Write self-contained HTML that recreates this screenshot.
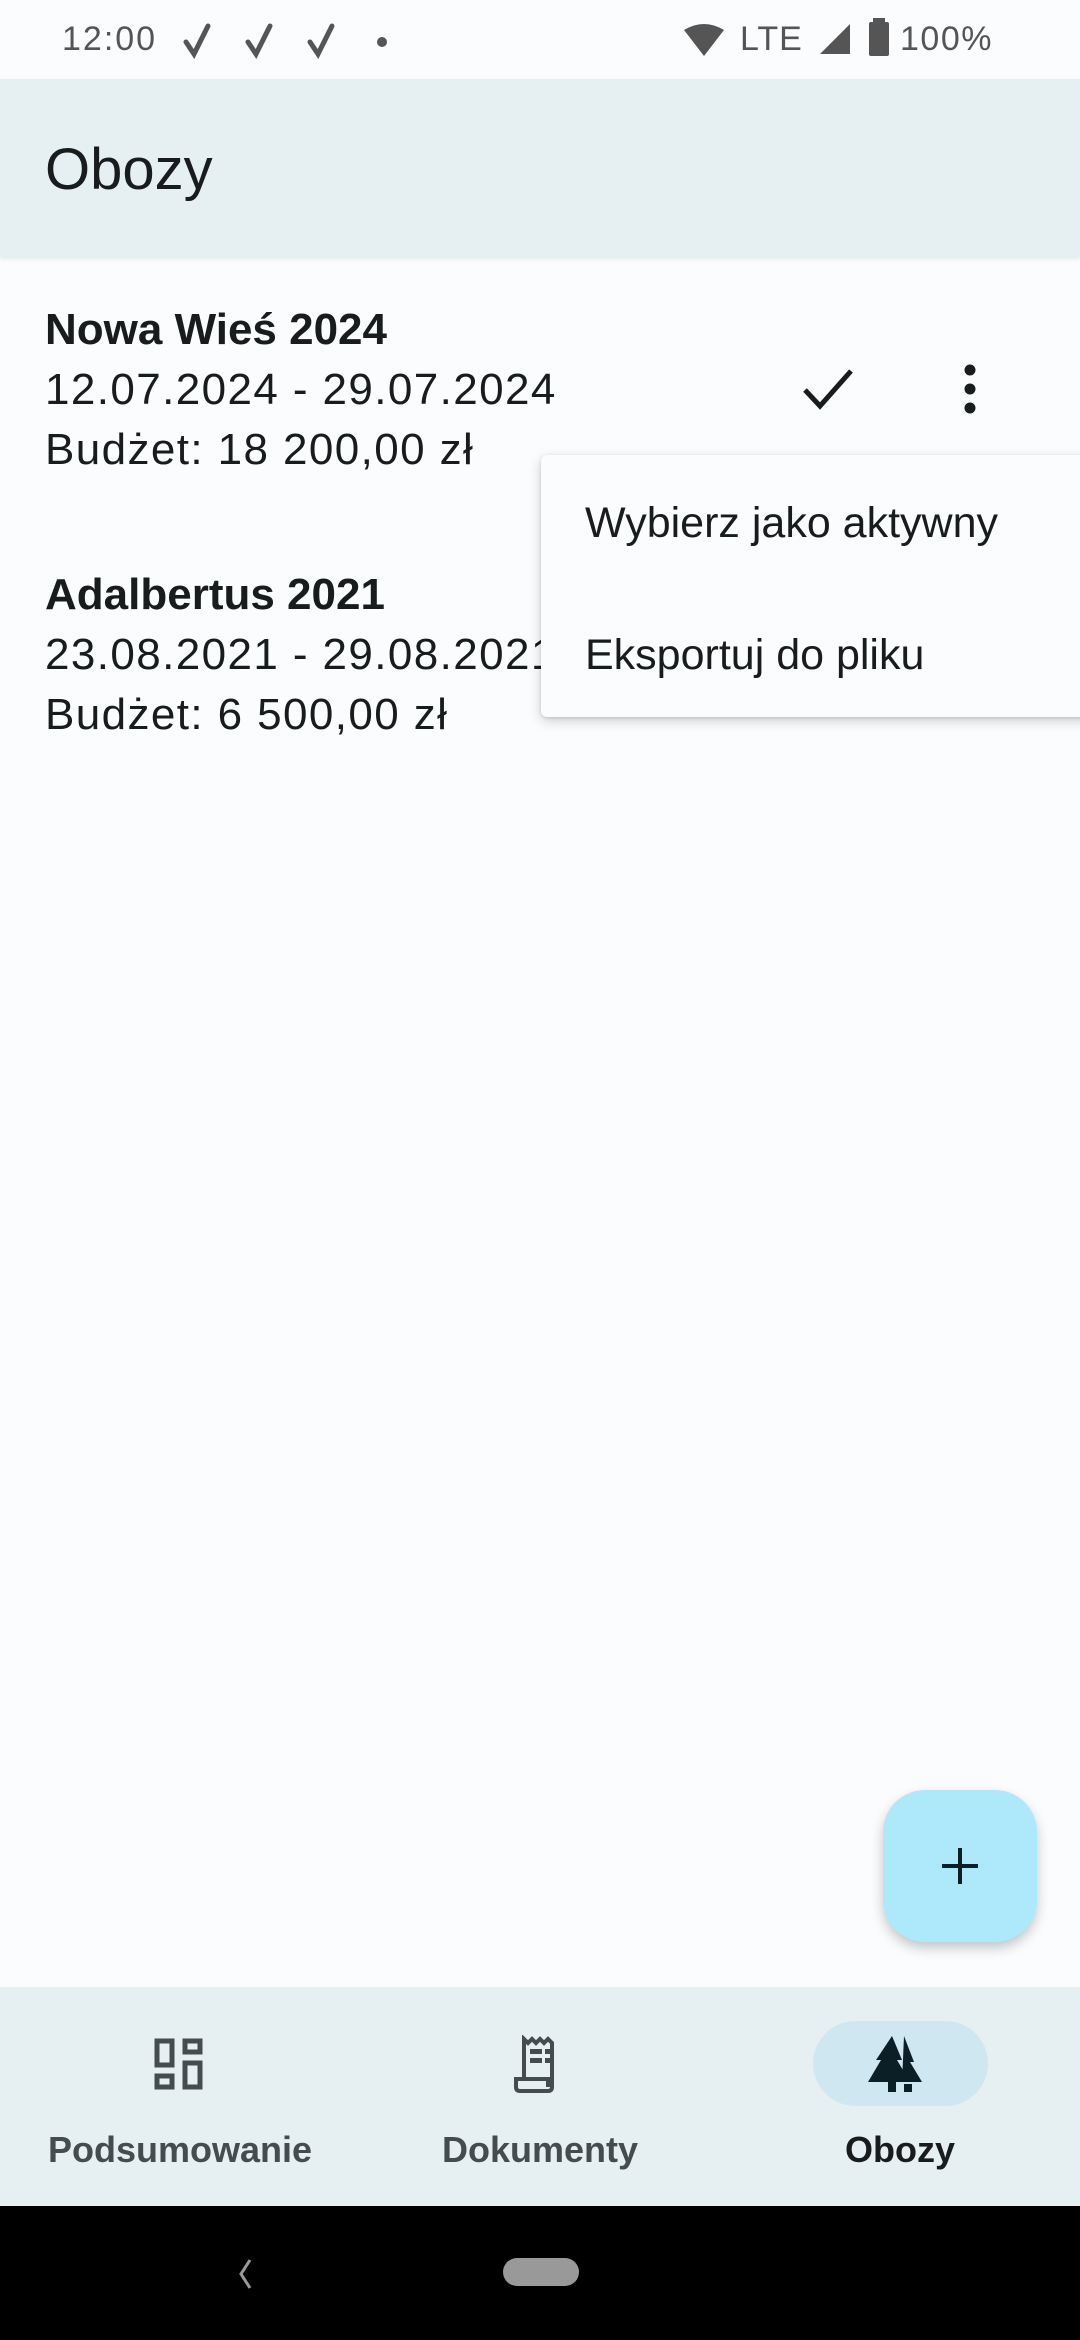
<!DOCTYPE html>
<html><head><meta charset="utf-8"><style>
*{margin:0;padding:0;box-sizing:border-box}
body{width:1080px;height:2340px;position:relative;background:#fafcfd;font-family:"Liberation Sans",sans-serif;color:#191c1d;overflow:hidden}
.abs{position:absolute;white-space:nowrap}
</style></head><body>
<!-- status bar -->
<div class="abs" style="left:0;top:0;width:1080px;height:80px;background:#fafcfd"></div>
<div class="abs" style="left:62px;top:19px;font-size:34px;letter-spacing:2px;color:#555;line-height:40px">12:00</div>
<svg class="abs" style="left:182px;top:20px" width="220" height="40" viewBox="0 0 220 40">
<g fill="none" stroke="#555" stroke-width="5" stroke-linecap="round"><path d="M4 22 L12 34 L26 6"/><path d="M66 22 L74 34 L88 6"/><path d="M128 22 L136 34 L150 6"/></g>
<circle cx="200" cy="22" r="5" fill="#555"/></svg>
<svg class="abs" style="left:682px;top:22px" width="44" height="36" viewBox="0 0 44 36"><path d="M2 8 Q22 -4 42 8 L22 34 Z" fill="#555"/></svg>
<div class="abs" style="left:740px;top:19px;font-size:34px;letter-spacing:1px;color:#555;line-height:40px">LTE</div>
<svg class="abs" style="left:818px;top:22px" width="34" height="34"><path d="M2 32 L32 2 L32 32 Z" fill="#555"/></svg>
<svg class="abs" style="left:868px;top:18px" width="22" height="40"><rect x="5" y="0" width="12" height="4" fill="#555"/><rect x="1" y="4" width="20" height="34" rx="2" fill="#555"/></svg>
<div class="abs" style="left:900px;top:19px;font-size:34px;letter-spacing:1.5px;color:#555;line-height:40px">100%</div>
<!-- app bar -->
<div class="abs" style="left:0;top:79px;width:1080px;height:178px;background:#e6eff1;box-shadow:0 2px 4px rgba(0,0,0,0.08)"></div>
<div class="abs" style="left:45px;top:135px;font-size:58px;line-height:70px">Obozy</div>
<!-- items -->
<div class="abs" style="left:45px;top:300px;font-size:44px;line-height:60px;letter-spacing:1.4px">
<div style="font-weight:bold;letter-spacing:0">Nowa Wieś 2024</div>
<div>12.07.2024 - 29.07.2024</div>
<div>Budżet: 18 200,00 zł</div>
</div>
<div class="abs" style="left:45px;top:565px;font-size:44px;line-height:60px;letter-spacing:1.4px">
<div style="font-weight:bold;letter-spacing:0">Adalbertus 2021</div>
<div>23.08.2021 - 29.08.2021</div>
<div>Budżet: 6 500,00 zł</div>
</div>
<svg class="abs" style="left:802px;top:366px" width="52" height="46" viewBox="0 0 52 46"><path d="M3 24 L18 40 L49 5" fill="none" stroke="#191c1d" stroke-width="5"/></svg>
<svg class="abs" style="left:960px;top:364px" width="20" height="50"><circle cx="10" cy="6" r="5.5" fill="#191c1d"/><circle cx="10" cy="25" r="5.5" fill="#191c1d"/><circle cx="10" cy="44" r="5.5" fill="#191c1d"/></svg>
<!-- menu -->
<div class="abs" style="left:541px;top:455px;width:560px;height:262px;background:#fafcfd;border-radius:6px;box-shadow:0 4px 12px rgba(0,0,0,0.18),0 1px 3px rgba(0,0,0,0.12)"></div>
<div class="abs" style="left:585px;top:498px;font-size:43px;line-height:50px">Wybierz jako aktywny</div>
<div class="abs" style="left:585px;top:630px;font-size:43px;line-height:50px">Eksportuj do pliku</div>
<!-- FAB -->
<div class="abs" style="left:883px;top:1790px;width:154px;height:152px;background:#ade9fb;border-radius:42px;box-shadow:0 6px 12px rgba(0,0,0,0.22)"></div>
<svg class="abs" style="left:940px;top:1846px" width="40" height="40"><path d="M20 2 V38 M2 20 H38" stroke="#0b1f26" stroke-width="4"/></svg>
<!-- bottom nav -->
<div class="abs" style="left:0;top:1987px;width:1080px;height:220px;background:#e6eff1"></div>
<div class="abs" style="left:813px;top:2021px;width:175px;height:85px;background:#cfe7f0;border-radius:43px"></div>
<svg class="abs" style="left:154px;top:2038px" width="52" height="52" viewBox="0 0 52 52"><g fill="none" stroke="#444c50" stroke-width="5"><rect x="3" y="3" width="15" height="24"/><rect x="31" y="3" width="15" height="11"/><rect x="3" y="38" width="15" height="11"/><rect x="31" y="25" width="15" height="24"/></g></svg>
<svg class="abs" style="left:514px;top:2035px" width="52" height="60" viewBox="0 0 52 60"><g fill="none" stroke="#444c50" stroke-width="4"><path d="M10 44 V4 l4 4 4-4 4 4 4-4 4 4 4-4 4 4 V52 q0 4 -4 4 H6 q-4 0 -4 -4 V44 H34 V52"/></g><rect x="16" y="14" width="12" height="5" fill="#444c50"/><rect x="31" y="14" width="5" height="5" fill="#444c50"/><rect x="16" y="23" width="12" height="5" fill="#444c50"/><rect x="31" y="23" width="5" height="5" fill="#444c50"/></svg>
<svg class="abs" style="left:866px;top:2036px" width="70" height="58" viewBox="0 0 70 58"><path d="M38 0 L48 26 H44 L56 46 H36 Z" fill="#0b1f26"/><path d="M26 0 L36 24 H31 L44 46 H30 V56 H22 V46 H2 L15 24 H10 Z" fill="#0b1f26"/><rect x="38" y="48" width="8" height="8" fill="#0b1f26"/></svg>
<div class="abs" style="left:0;width:360px;top:2128px;text-align:center;font-size:36px;font-weight:bold;color:#444c50;line-height:44px">Podsumowanie</div>
<div class="abs" style="left:360px;width:360px;top:2128px;text-align:center;font-size:36px;font-weight:bold;color:#444c50;line-height:44px">Dokumenty</div>
<div class="abs" style="left:720px;width:360px;top:2128px;text-align:center;font-size:36px;font-weight:bold;color:#191c1d;line-height:44px">Obozy</div>
<!-- system nav -->
<div class="abs" style="left:0;top:2206px;width:1080px;height:134px;background:#000"></div>
<svg class="abs" style="left:236px;top:2258px" width="20" height="32"><path d="M14 2 L5 16 L14 30" fill="none" stroke="#999" stroke-width="3"/></svg>
<div class="abs" style="left:503px;top:2258px;width:76px;height:28px;background:#999;border-radius:14px"></div>
</body></html>
